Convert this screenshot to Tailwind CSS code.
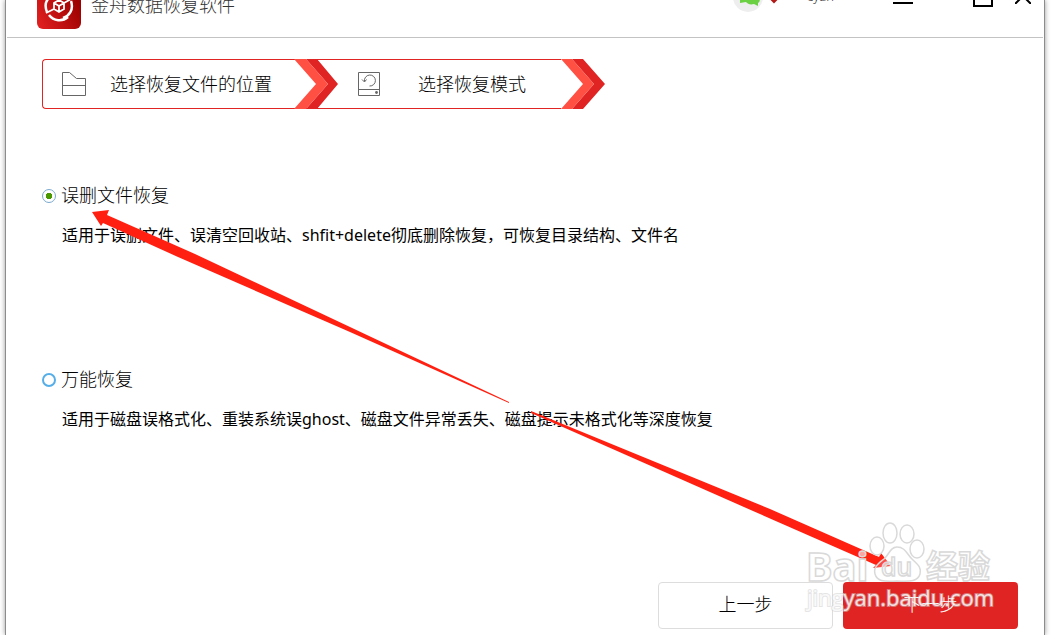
<!DOCTYPE html>
<html lang="zh-CN">
<head>
    <meta charset="UTF-8">
    <meta name="viewport" content="width=device-width, initial-scale=1.0">
    <title>金舟数据恢复软件</title>
    <script src="https://cdn.jsdelivr.net/npm/@tailwindcss/browser@4"></script>
</head>
<body class="h-screen overflow-hidden relative bg-white font-['Noto_Sans','Noto_Sans_CJK_SC',sans-serif] font-light text-black">
    <div class="h-full flex pl-[5px] pr-[6px] bg-white">
        <div class="flex-1 flex flex-col bg-white border-x border-[#8c8c8c] shadow-[0_0_5px_#999]">
            <!-- Title bar -->
            <header class="-mt-4 h-[54px] shrink-0 flex items-start border-b border-[#c3c3c3] mx-px pl-[30px] pr-3">
                <svg class="w-11 h-11 mt-px shrink-0" viewBox="0 0 44 44" fill="none">
                    <defs>
                        <linearGradient id="logo" x1="0" y1="1" x2="1" y2="0.5">
                            <stop offset="0" stop-color="#e52222"/>
                            <stop offset="1" stop-color="#9c0000"/>
                        </linearGradient>
                    </defs>
                    <rect width="44" height="44" rx="6" fill="url(#logo)"/>
                    <path d="M10 27C5 15 15 8 24 9M34 16c3 9-2 15-8 17M12 30a13 13 0 0 0 19 2" stroke="#fff" stroke-width="2.5"/>
                    <path d="M22 15l5 3v6l-5 3-5-3v-6zM17 18l5 3 5-3M22 21v6M17 24l-8 4M27 18l7-4" stroke="#fff" stroke-width="1.8"/>
                </svg>
                <h1 class="ml-[10px] mt-2 text-lg leading-[26px] text-[#333]">金舟数据恢复软件</h1>
                <div class="ml-auto flex items-start">
                    <svg class="w-[50px] h-[30px]" viewBox="0 0 50 30">
                        <circle cx="15" cy="13" r="15" fill="#eee"/>
                        <path d="M7 10h20c0 6 0 8-2 9l0 3-4-2c-4 1-6 0-8-2l-6 1z" fill="#6bd143"/>
                        <path d="M37 14h8l-4 4z" fill="#e9a020" stroke="#b01818" stroke-width="2"/>
                    </svg>
                    <span class="ml-6 mt-[3px] w-[86px] text-[13px] leading-[18px] text-[#333]">cyan</span>
                    <button type="button" aria-label="最小化" class="w-5 h-5 border-b-2 border-black"></button>
                    <button type="button" aria-label="最大化" class="ml-[60px] w-5 h-[23px] border-2 border-black"></button>
                    <button type="button" aria-label="关闭" class="ml-[22px] w-4 h-5">
                        <svg class="w-4 h-5" viewBox="0 0 16 20" stroke="#000" stroke-width="2"><path d="M1 5l15 15M15 5L0 20"/></svg>
                    </button>
                </div>
            </header>

            <main class="flex-1 flex flex-col pl-9 pr-[26px] pt-[21px] pb-[6px]">
                <!-- Steps -->
                <ol class="flex self-start h-[50px] text-lg">
                    <li class="flex items-center border-y border-l rounded-l border-[#df2423] pl-[19px] w-[252px]">
                        <svg class="w-[26px] h-[26px] shrink-0" viewBox="0 0 26 26" fill="none" stroke="#666"><path d="M.5 1.5h7l7 6h9v17H.5zM.5 14.5h23"/></svg>
                        <span class="ml-[22px] whitespace-nowrap">选择恢复文件的位置</span>
                    </li>
                    <li class="flex">
                        <svg class="w-11 h-[50px] relative z-10" viewBox="0 0 44 50">
                            <path d="M0 0h12v1H0zM0 49h23v1H0z" fill="#df2423"/>
                            <path d="M12 0h11l21 25-21 25H12l22-25z" fill="#df2423"/>
                            <path d="M0 0h12l22 25-22 25H0l22-25z" fill="#ff5043"/>
                        </svg>
                        <div class="flex items-center border-y border-[#df2423] -ml-[21px] pl-[41px] w-[244px]">
                            <svg class="w-[22px] h-6 shrink-0" viewBox="0 0 22 24" fill="none" stroke="#666">
                                <path d="M.5.5h21v23H.5zM.5 17.5h21M6.5 9.5a5.500 5.500 0 1 1 5 4.500M4 7.500l2.500 2.500 2-2.500"/>
                                <circle cx="18.5" cy="20.5" r="1.4" fill="#666" stroke="none"/>
                            </svg>
                            <span class="ml-[38px] whitespace-nowrap">选择恢复模式</span>
                        </div>
                        <svg class="w-11 h-[50px]" viewBox="0 0 44 50">
                            <path d="M11 0h11l22 25-22 25H11l22-25z" fill="#df2423"/>
                            <path d="M0 0h11l22 25-22 25H0l22-25z" fill="#ff5043"/>
                        </svg>
                    </li>
                </ol>

                <!-- Recovery modes -->
                <fieldset class="mt-[73px] flex flex-col gap-[119px]">
                    <div>
                        <label class="flex items-center text-lg leading-[27px]">
                            <input type="radio" name="mode" checked class="appearance-none w-[14px] h-[14px] mr-[5px] rounded-full border border-[#7aa9cf] bg-radial from-[#4b9900] from-[3px] to-white to-[3px]">
                            误删文件恢复
                        </label>
                        <p class="mt-[14px] pl-5 text-base leading-6 font-normal">适用于误删文件、误清空回收站、shfit+delete彻底删除恢复，可恢复目录结构、文件名</p>
                    </div>
                    <div>
                        <label class="flex items-center text-lg leading-[27px]">
                            <input type="radio" name="mode" class="appearance-none w-[14px] h-[14px] mr-[5px] rounded-full border-2 border-[#56aee8] bg-white">
                            万能恢复
                        </label>
                        <p class="mt-[14px] pl-5 text-base leading-6 font-normal">适用于磁盘误格式化、重装系统误ghost、磁盘文件异常丢失、磁盘提示未格式化等深度恢复</p>
                    </div>
                </fieldset>

                <div class="mt-auto flex justify-end gap-[10px] text-lg">
                    <button type="button" class="w-[175px] h-[47px] pb-1 rounded border border-[#ddd] bg-white">上一步</button>
                    <button type="button" class="w-[175px] h-[47px] pb-1 rounded bg-[#df2423] text-white">下一步</button>
                </div>
            </main>
        </div>
    </div>

    <!-- Arrows and watermark over the window -->
    <svg class="absolute left-0 top-0 w-[1051px] h-[635px] pointer-events-none" viewBox="0 0 1051 635">
        <g fill="#ff2012">
            <path d="M92 212l17-2-2 5 88 39 155 73 159 75v1l-159-71-172-75-75-34-2 3z"/>
            <path d="M891 566l-10-13-2 4-109-48-239-98v2l222 98 123 54-3 3z"/>
        </g>
        <g fill="#fff" fill-opacity="0.6" stroke="#d9d9d9" stroke-width="1.5">
            <text x="806" y="581" font-family="Noto Sans" font-weight="bold" font-size="40">Bai</text>
            <ellipse cx="877" cy="546" rx="7" ry="9"/>
            <ellipse cx="890" cy="533" rx="7" ry="10"/>
            <ellipse cx="907" cy="534" rx="7" ry="9"/>
            <ellipse cx="917" cy="549" rx="7" ry="9"/>
            <path fill-opacity="0.2" d="M897 547c8 0 10 7 15 12s10 8 8 15-9 8-23 7c-14 1-20 0-22-7s4-11 9-15 6-12 13-12z"/>
            <text x="881" y="576" font-family="Noto Sans" font-weight="500" font-size="25">du</text>
            <text x="926" y="578" font-family="Noto Sans CJK SC" font-weight="bold" font-size="32">经验</text>
        </g>
        <text x="807" y="606" font-family="Open Sans" font-weight="500" font-size="22" fill="#fff" fill-opacity="0.8" stroke="#ccc" stroke-opacity="0.5" stroke-width="2" paint-order="stroke">jingyan.baidu.com</text>
    </svg>
</body>
</html>
